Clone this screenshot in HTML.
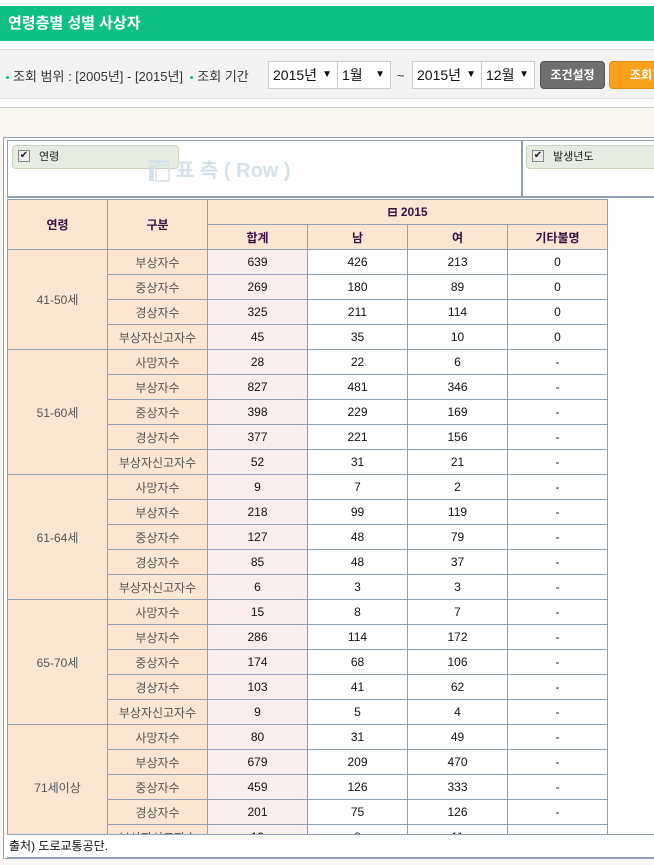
<!DOCTYPE html>
<html><head><meta charset="utf-8">
<style>
*{margin:0;padding:0;box-sizing:border-box}
body{width:654px;height:865px;overflow:hidden;background:#fff;font-family:"Liberation Sans","Noto Sans CJK KR",sans-serif;font-size:12px;position:relative}
.abs{position:absolute}
#title{left:0;top:6px;width:654px;height:35px;background:#10bf84;color:#fff;font-weight:bold;font-size:15px;line-height:35px;padding-left:8px}
#filter{left:0;top:49px;width:654px;height:50px;background:#f3f3f3;border-top:1px solid #ddd;border-bottom:1px solid #ddd;font-size:13px;color:#333}
.dot{display:inline-block;width:3px;height:3px;background:#10bf84;border-radius:50%;margin-right:4px;vertical-align:middle}
.sel{position:absolute;top:11px;height:28px;background:#fff;border:1px solid #ccc;font-size:14px;line-height:26px;padding-left:4px;color:#111}
.sel:after{content:"▼";position:absolute;right:5px;top:0;font-size:10px}
#bg{left:0;top:107px;width:654px;height:758px;background:#f8f7f2;border-top:1px solid #ccc}
#box{left:3px;top:137px;width:660px;height:722px;border:1px solid #8fa0b8;background:#fff}
#pivot{left:7px;top:140px;width:660px;height:58px;border:1px solid #8fa0b8;border-bottom:2px solid #8fa0b8}
.chip{position:absolute;height:24px;background:#e6ecdf;border:1px solid #c9d4bf;border-radius:4px;font-size:11px;line-height:22px;padding-left:26px;color:#222}
.cb{position:absolute;left:5px;top:4px;width:12px;height:12px;border:1px solid #888;background:#eee;font-size:10px;line-height:10px;text-align:center}
table{position:absolute;left:7px;top:199px;border-collapse:collapse;table-layout:fixed}
td{border:1px solid #8fa0b8;height:25px;text-align:center;font-size:12px;color:#111;white-space:nowrap;overflow:hidden}
.h{background:#fbe5d3;color:#3a1040;font-weight:bold}
.a{background:#fbe5d3;color:#555}
.g{background:#fbe5d3;color:#555}
.s{background:#f9eded}
#clip{left:0;top:0;width:654px;height:834px;overflow:hidden}
#foot{left:7px;top:834px;width:660px;height:24px;background:#fff;border-top:1px solid #8fa0b8;border-bottom:1px solid #8fa0b8;font-size:12px;line-height:22px;padding-left:2px;color:#111}
</style></head><body>
<div id="title" class="abs">연령층별 성별 사상자</div>
<div id="filter" class="abs">
<div class="abs" style="left:6px;top:16px;white-space:nowrap"><span class="dot"></span>조회 범위 : [2005년] - [2015년] &nbsp;<span class="dot"></span>조회 기간</div>
<div class="sel" style="left:268px;width:70px">2015년</div>
<div class="sel" style="left:337px;width:54px">1월</div>
<div class="abs" style="left:397px;top:18px">~</div>
<div class="sel" style="left:412px;width:70px">2015년</div>
<div class="sel" style="left:481px;width:54px">12월</div>
<div class="abs" style="left:540px;top:11px;width:65px;height:28px;background:#6f6f6f;border:1px solid #555;border-radius:4px;color:#fff;font-weight:bold;text-align:center;line-height:26px;font-size:12px">조건설정</div>
<div class="abs" style="left:609px;top:11px;width:60px;height:28px;background:#fba01a;border:1px solid #e08a10;border-radius:4px;color:#fff;font-weight:bold;line-height:26px;padding-left:20px;font-size:12px">조회</div>
</div>
<div id="bg" class="abs"></div>
<div id="box" class="abs"></div>
<div id="pivot" class="abs">
<div class="chip" style="left:4px;top:4px;width:167px"><span class="cb">✔</span>연령</div>
<svg class="abs" style="left:140px;top:16px" width="220" height="30"><rect x="1" y="3" width="20" height="3" fill="#d5e1e8"/><rect x="1" y="8" width="5" height="16" fill="#d5e1e8"/><rect x="8" y="8" width="13" height="16" fill="none" stroke="#d5e1e8" stroke-width="1.5"/><text x="28" y="20" font-size="20" font-weight="bold" fill="#d5e1e8" font-family="Liberation Sans,Noto Sans CJK KR,sans-serif">표  측 ( Row )</text></svg>
<div class="abs" style="left:513px;top:0;width:2px;height:56px;background:#8fa0b8"></div>
<div class="chip" style="left:518px;top:4px;width:150px"><span class="cb">✔</span>발생년도</div>
</div>
<div id="clip" class="abs">
<table>
<colgroup><col style="width:100px"><col style="width:100px"><col style="width:100px"><col style="width:100px"><col style="width:100px"><col style="width:100px"></colgroup>
<tr><td class="h" rowspan="2">연령</td><td class="h" rowspan="2">구분</td><td class="h" colspan="4">⊟ 2015</td></tr>
<tr><td class="h">합계</td><td class="h">남</td><td class="h">여</td><td class="h">기타불명</td></tr>
<tr><td class="a" rowspan="4">41-50세</td><td class="g">부상자수</td><td class="s">639</td><td>426</td><td>213</td><td>0</td></tr>
<tr><td class="g">중상자수</td><td class="s">269</td><td>180</td><td>89</td><td>0</td></tr>
<tr><td class="g">경상자수</td><td class="s">325</td><td>211</td><td>114</td><td>0</td></tr>
<tr><td class="g">부상자신고자수</td><td class="s">45</td><td>35</td><td>10</td><td>0</td></tr>
<tr><td class="a" rowspan="5">51-60세</td><td class="g">사망자수</td><td class="s">28</td><td>22</td><td>6</td><td>-</td></tr>
<tr><td class="g">부상자수</td><td class="s">827</td><td>481</td><td>346</td><td>-</td></tr>
<tr><td class="g">중상자수</td><td class="s">398</td><td>229</td><td>169</td><td>-</td></tr>
<tr><td class="g">경상자수</td><td class="s">377</td><td>221</td><td>156</td><td>-</td></tr>
<tr><td class="g">부상자신고자수</td><td class="s">52</td><td>31</td><td>21</td><td>-</td></tr>
<tr><td class="a" rowspan="5">61-64세</td><td class="g">사망자수</td><td class="s">9</td><td>7</td><td>2</td><td>-</td></tr>
<tr><td class="g">부상자수</td><td class="s">218</td><td>99</td><td>119</td><td>-</td></tr>
<tr><td class="g">중상자수</td><td class="s">127</td><td>48</td><td>79</td><td>-</td></tr>
<tr><td class="g">경상자수</td><td class="s">85</td><td>48</td><td>37</td><td>-</td></tr>
<tr><td class="g">부상자신고자수</td><td class="s">6</td><td>3</td><td>3</td><td>-</td></tr>
<tr><td class="a" rowspan="5">65-70세</td><td class="g">사망자수</td><td class="s">15</td><td>8</td><td>7</td><td>-</td></tr>
<tr><td class="g">부상자수</td><td class="s">286</td><td>114</td><td>172</td><td>-</td></tr>
<tr><td class="g">중상자수</td><td class="s">174</td><td>68</td><td>106</td><td>-</td></tr>
<tr><td class="g">경상자수</td><td class="s">103</td><td>41</td><td>62</td><td>-</td></tr>
<tr><td class="g">부상자신고자수</td><td class="s">9</td><td>5</td><td>4</td><td>-</td></tr>
<tr><td class="a" rowspan="5">71세이상</td><td class="g">사망자수</td><td class="s">80</td><td>31</td><td>49</td><td>-</td></tr>
<tr><td class="g">부상자수</td><td class="s">679</td><td>209</td><td>470</td><td>-</td></tr>
<tr><td class="g">중상자수</td><td class="s">459</td><td>126</td><td>333</td><td>-</td></tr>
<tr><td class="g">경상자수</td><td class="s">201</td><td>75</td><td>126</td><td>-</td></tr>
<tr><td class="g">부상자신고자수</td><td class="s">19</td><td>8</td><td>11</td><td>-</td></tr>
</table>
</div>
<div id="foot" class="abs">출처) 도로교통공단.</div>
</body></html>
